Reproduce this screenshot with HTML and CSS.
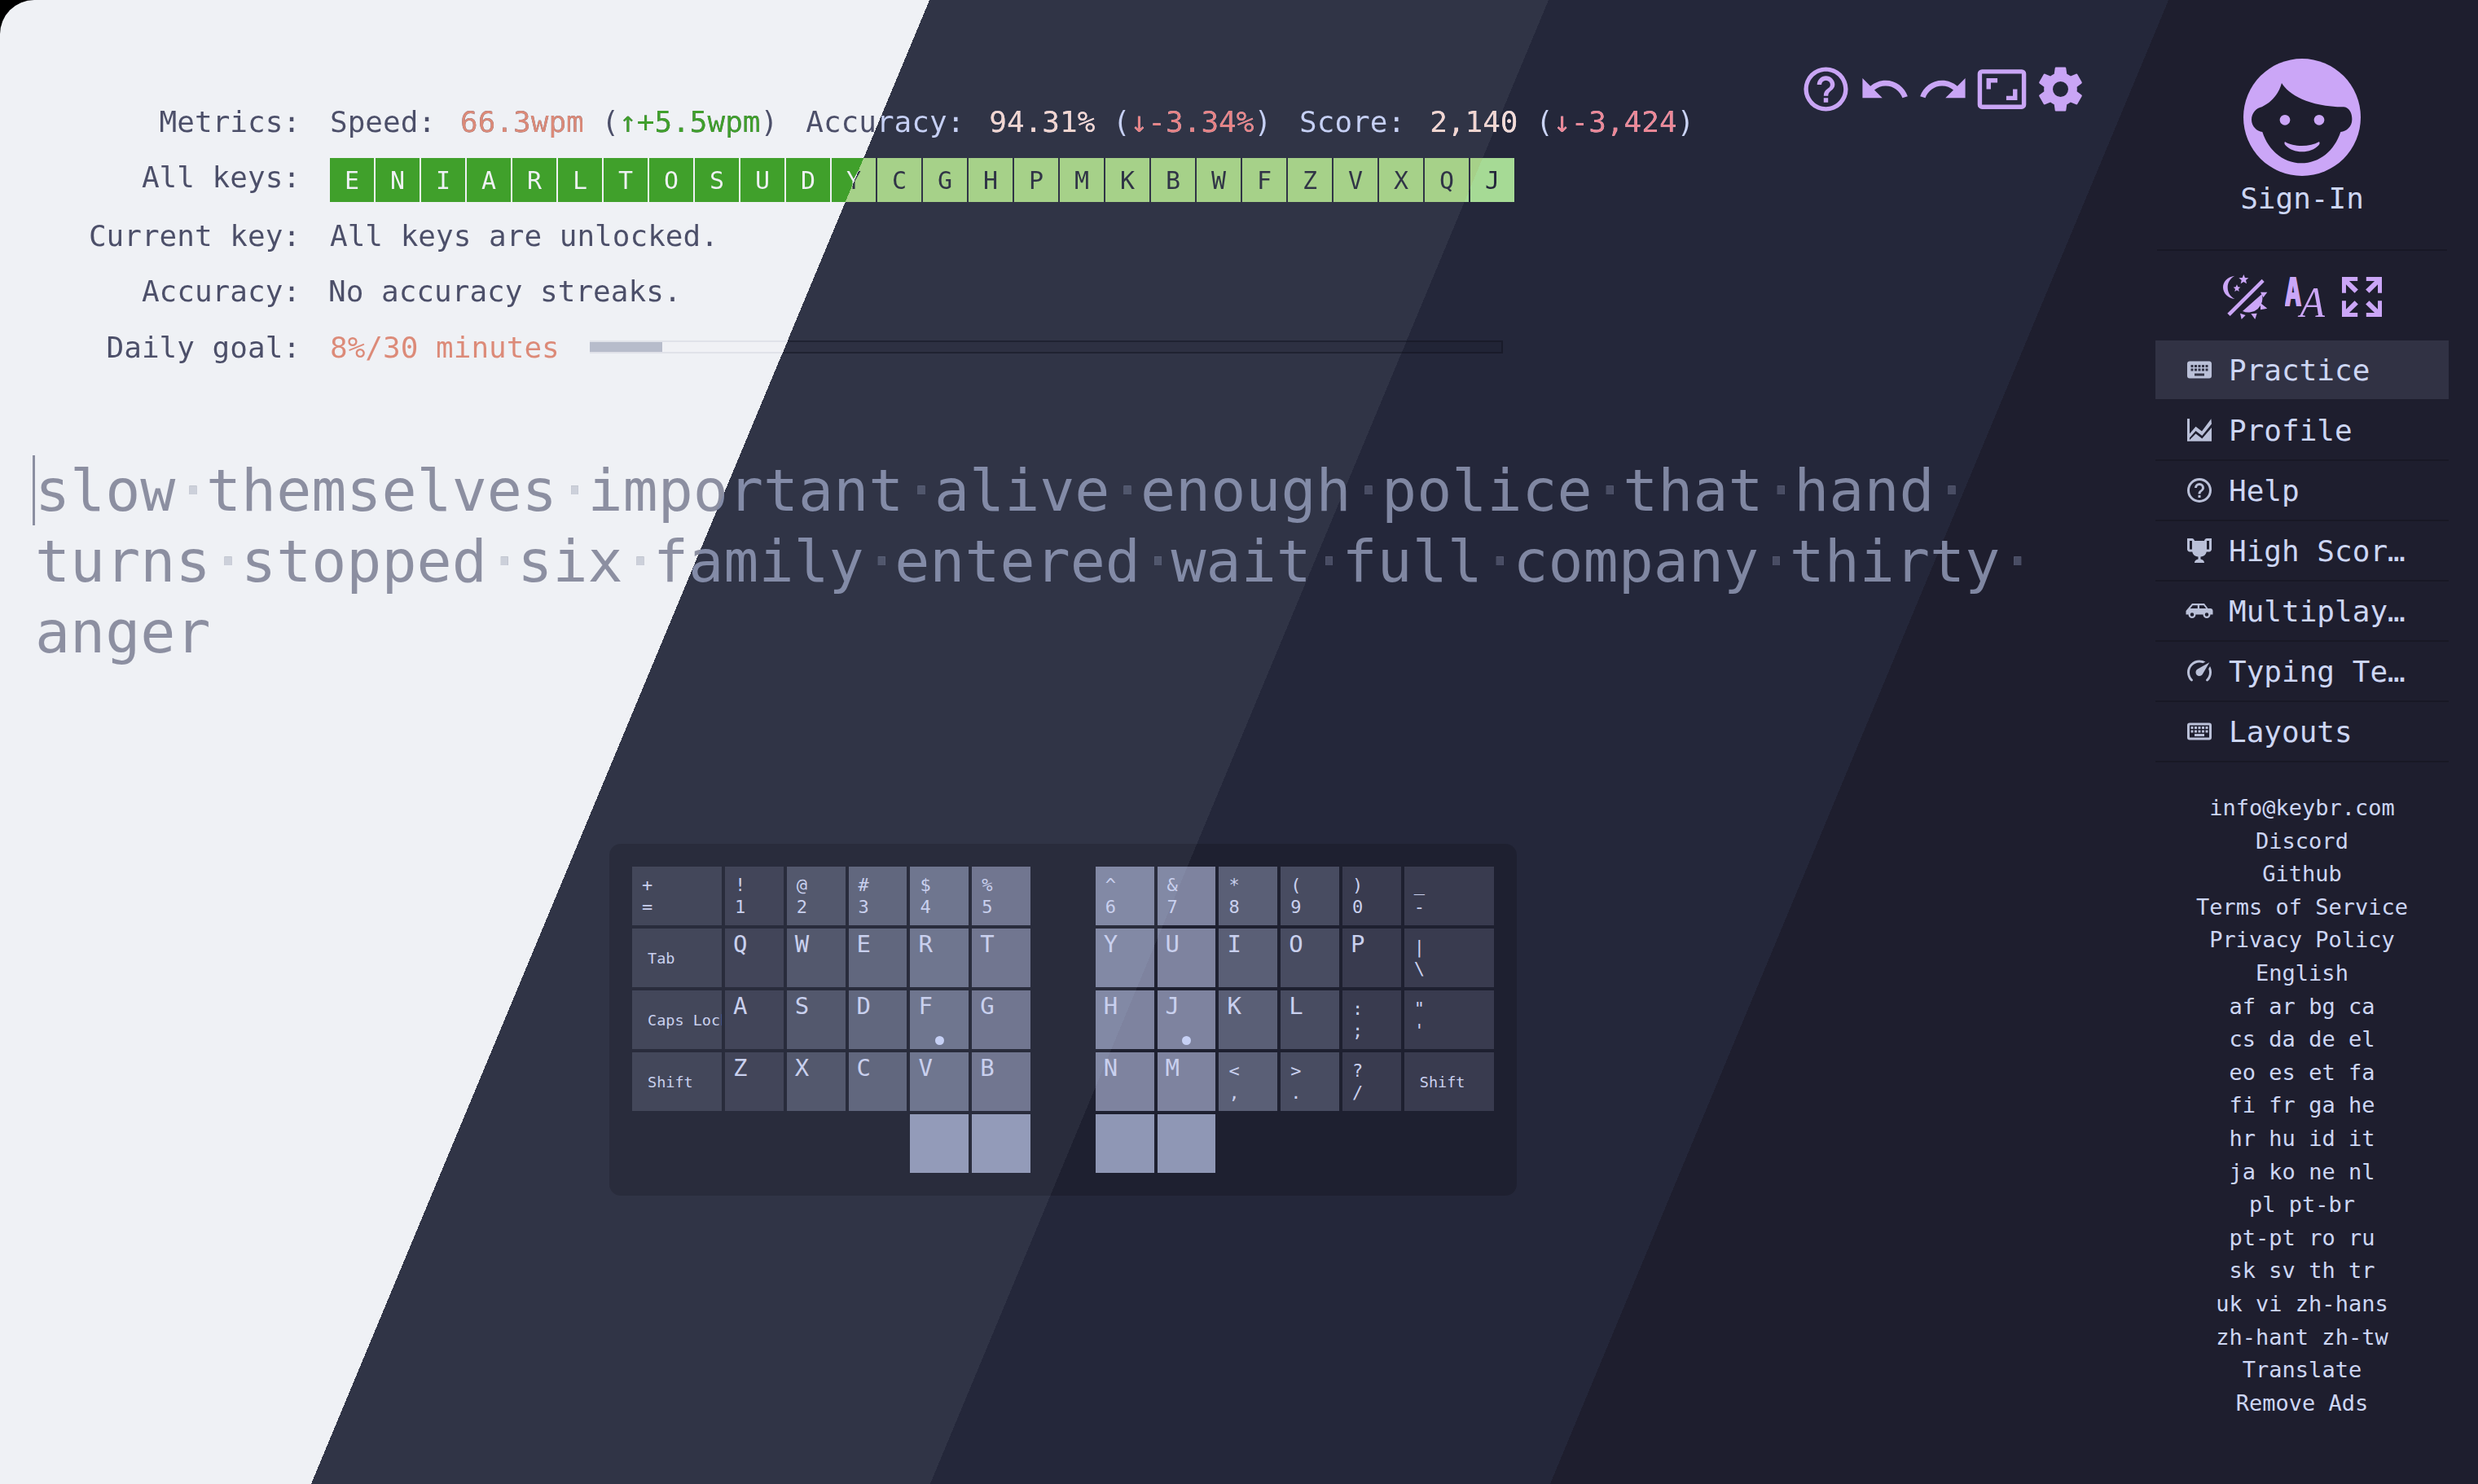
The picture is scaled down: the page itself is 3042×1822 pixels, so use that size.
FILE: index.html
```html
<!DOCTYPE html>
<html lang="en">
<head>
    <meta charset="UTF-8">
    <meta name="viewport" content="width=device-width, initial-scale=1.0">
    <title>keybr.com</title>
    <link rel="stylesheet" href="styles.css">
</head>
<body>
    <main class="main">
        <div class="top">
            <div class="stats">
                <div class="row row-metrics">
                    <div class="label">Metrics:</div>
                    <div class="metrics">
                        <div class="metric wipe c-text"><span class="metric-name">Speed:</span><span class="wipe c-rose">66.3wpm</span> (<span class="wipe c-green">↑+5.5wpm</span>)</div>
                        <div class="metric wipe c-text"><span class="metric-name">Accuracy:</span><span class="wipe c-rose">94.31%</span> (<span class="wipe c-red">↓-3.34%</span>)</div>
                        <div class="metric wipe c-text"><span class="metric-name">Score:</span><span class="wipe c-rose">2,140</span> (<span class="wipe c-red">↓-3,424</span>)</div>
                    </div>
                </div>
                <div class="row">
                    <div class="label label-keys">All keys:</div>
                    <div class="keyset">
                        <div class="unlocked"><span class="wipe c-on-key">E</span></div>
                        <div class="unlocked"><span class="wipe c-on-key">N</span></div>
                        <div class="unlocked"><span class="wipe c-on-key">I</span></div>
                        <div class="unlocked"><span class="wipe c-on-key">A</span></div>
                        <div class="unlocked"><span class="wipe c-on-key">R</span></div>
                        <div class="unlocked"><span class="wipe c-on-key">L</span></div>
                        <div class="unlocked"><span class="wipe c-on-key">T</span></div>
                        <div class="unlocked"><span class="wipe c-on-key">O</span></div>
                        <div class="unlocked"><span class="wipe c-on-key">S</span></div>
                        <div class="unlocked"><span class="wipe c-on-key">U</span></div>
                        <div class="unlocked"><span class="wipe c-on-key">D</span></div>
                        <div class="unlocked"><span class="wipe c-on-key">Y</span></div>
                        <div class="unlocked"><span class="wipe c-on-key">C</span></div>
                        <div class="unlocked"><span class="wipe c-on-key">G</span></div>
                        <div class="unlocked"><span class="wipe c-on-key">H</span></div>
                        <div class="unlocked"><span class="wipe c-on-key">P</span></div>
                        <div class="unlocked"><span class="wipe c-on-key">M</span></div>
                        <div class="unlocked"><span class="wipe c-on-key">K</span></div>
                        <div class="unlocked"><span class="wipe c-on-key">B</span></div>
                        <div class="unlocked"><span class="wipe c-on-key">W</span></div>
                        <div class="unlocked"><span class="wipe c-on-key">F</span></div>
                        <div class="unlocked"><span class="wipe c-on-key">Z</span></div>
                        <div class="unlocked"><span class="wipe c-on-key">V</span></div>
                        <div class="unlocked"><span class="wipe c-on-key">X</span></div>
                        <div class="unlocked"><span class="wipe c-on-key">Q</span></div>
                        <div class="unlocked"><span class="wipe c-on-key">J</span></div>
                    </div>
                </div>
                <div class="row">
                    <div class="label">Current key:</div>
                    <div class="value">All keys are unlocked.</div>
                </div>
                <div class="row">
                    <div class="label">Accuracy:</div>
                    <div class="value value-tight">No accuracy streaks.</div>
                </div>
                <div class="row row-goal">
                    <div class="label">Daily goal:</div>
                    <div class="goal-text">8%/30 minutes</div>
                    <div class="goal-track">
                        <div class="goal-inner"><div class="goal-fill" style="width: 8%"></div></div>
                    </div>
                </div>
            </div>

            <div class="toolbar">
                <svg class="tool" viewBox="0 0 24 24"><path d="M11,18H13V16H11V18M12,2A10,10 0 0,0 2,12A10,10 0 0,0 12,22A10,10 0 0,0 22,12A10,10 0 0,0 12,2M12,20C7.59,20 4,16.41 4,12C4,7.59 7.59,4 12,4C16.41,4 20,7.59 20,12C20,16.41 16.41,20 12,20M12,6A4,4 0 0,0 8,10H10A2,2 0 0,1 12,8A2,2 0 0,1 14,10C14,12 11,11.75 11,15H13C13,12.75 16,12.5 16,10A4,4 0 0,0 12,6Z"/></svg>
                <svg class="tool" viewBox="0 0 24 24"><path d="M12.5,8C9.85,8 7.45,9 5.6,10.6L2,7V16H11L7.38,12.38C8.77,11.22 10.54,10.5 12.5,10.5C16.04,10.5 19.05,12.81 20.1,16L22.47,15.22C21.08,11.03 17.15,8 12.5,8Z"/></svg>
                <svg class="tool" viewBox="0 0 24 24"><path d="M18.4,10.6C16.55,9 14.15,8 11.5,8C6.85,8 2.92,11.03 1.54,15.22L3.9,16C4.95,12.81 7.95,10.5 11.5,10.5C13.45,10.5 15.23,11.22 16.62,12.38L13,16H22V7L18.4,10.6Z"/></svg>
                <svg class="tool" viewBox="0 0 24 24"><path d="M19,12H17V15H14V17H19V12M7,9H10V7H5V12H7V9M21,3H3A2,2 0 0,0 1,5V19A2,2 0 0,0 3,21H21A2,2 0 0,0 23,19V5A2,2 0 0,0 21,3M21,19H3V5H21V19Z"/></svg>
                <svg class="tool" viewBox="0 0 24 24"><path d="M12,15.5A3.5,3.5 0 0,1 8.5,12A3.5,3.5 0 0,1 12,8.5A3.5,3.5 0 0,1 15.5,12A3.5,3.5 0 0,1 12,15.5M19.43,12.97C19.47,12.65 19.5,12.33 19.5,12C19.5,11.67 19.47,11.34 19.43,11L21.54,9.37C21.73,9.22 21.78,8.95 21.66,8.73L19.66,5.27C19.54,5.05 19.27,4.96 19.05,5.05L16.56,6.05C16.04,5.66 15.5,5.32 14.87,5.07L14.5,2.42C14.46,2.18 14.25,2 14,2H10C9.75,2 9.54,2.18 9.5,2.42L9.13,5.07C8.5,5.32 7.96,5.66 7.44,6.05L4.95,5.05C4.73,4.96 4.46,5.05 4.34,5.27L2.34,8.73C2.21,8.95 2.27,9.22 2.46,9.37L4.57,11C4.53,11.34 4.5,11.67 4.5,12C4.5,12.33 4.53,12.65 4.57,12.97L2.46,14.63C2.27,14.78 2.21,15.05 2.34,15.27L4.34,18.73C4.46,18.95 4.73,19.03 4.95,18.95L7.44,17.94C7.96,18.34 8.5,18.68 9.13,18.93L9.5,21.58C9.54,21.82 9.75,22 10,22H14C14.25,22 14.46,21.82 14.5,21.58L14.87,18.93C15.5,18.67 16.04,18.34 16.56,17.94L19.05,18.95C19.27,19.03 19.54,18.95 19.66,18.73L21.66,15.27C21.78,15.05 21.73,14.78 21.54,14.63L19.43,12.97Z"/></svg>
            </div>
        </div>

        <div class="practice">
            <span class="cursor"></span>
            <div class="line wipe c-word">slow<span class="wipe c-dot">·</span>themselves<span class="wipe c-dot">·</span>important<span class="wipe c-dot">·</span>alive<span class="wipe c-dot">·</span>enough<span class="wipe c-dot">·</span>police<span class="wipe c-dot">·</span>that<span class="wipe c-dot">·</span>hand<span class="wipe c-dot">·</span></div>
            <div class="line wipe c-word">turns<span class="wipe c-dot">·</span>stopped<span class="wipe c-dot">·</span>six<span class="wipe c-dot">·</span>family<span class="wipe c-dot">·</span>entered<span class="wipe c-dot">·</span>wait<span class="wipe c-dot">·</span>full<span class="wipe c-dot">·</span>company<span class="wipe c-dot">·</span>thirty<span class="wipe c-dot">·</span></div>
            <div class="line wipe c-word">anger</div>
        </div>

        <div class="keyboard">
            <div class="key wide h17">+<br>=</div>
            <div class="key sym h16">!<br>1</div>
            <div class="key sym h27">@<br>2</div>
            <div class="key sym h36">#<br>3</div>
            <div class="key sym h45">$<br>4</div>
            <div class="key sym h46">%<br>5</div>
            <div class="spacer"></div>
            <div class="key sym h58">^<br>6</div>
            <div class="key sym h58">&amp;<br>7</div>
            <div class="key sym h36">*<br>8</div>
            <div class="key sym h25">(<br>9</div>
            <div class="key sym h16">)<br>0</div>
            <div class="key wide h16">_<br>-</div>

            <div class="key named h17">Tab</div>
            <div class="key h16">Q</div>
            <div class="key h27">W</div>
            <div class="key h36">E</div>
            <div class="key h45">R</div>
            <div class="key h46">T</div>
            <div class="spacer"></div>
            <div class="key h58">Y</div>
            <div class="key h58">U</div>
            <div class="key h36">I</div>
            <div class="key h25">O</div>
            <div class="key h16">P</div>
            <div class="key wide h16">|<br>\</div>

            <div class="key named h17">Caps Lock</div>
            <div class="key h16">A</div>
            <div class="key h27">S</div>
            <div class="key h36">D</div>
            <div class="key h45 bump">F</div>
            <div class="key h46">G</div>
            <div class="spacer"></div>
            <div class="key h58">H</div>
            <div class="key h58 bump">J</div>
            <div class="key h36">K</div>
            <div class="key h25">L</div>
            <div class="key sym h16">:<br>;</div>
            <div class="key wide h16">"<br>'</div>

            <div class="key named h17">Shift</div>
            <div class="key h16">Z</div>
            <div class="key h27">X</div>
            <div class="key h36">C</div>
            <div class="key h45">V</div>
            <div class="key h46">B</div>
            <div class="spacer"></div>
            <div class="key h58">N</div>
            <div class="key h58">M</div>
            <div class="key sym h36">&lt;<br>,</div>
            <div class="key sym h25">&gt;<br>.</div>
            <div class="key sym h16">?<br>/</div>
            <div class="key named h16">Shift</div>

            <div class="key h68 thumb-left"></div>
            <div class="key h68"></div>
            <div class="key h68 thumb-right"></div>
            <div class="key h68"></div>
        </div>
    </main>

    <aside class="sidebar">
        <div class="account">
            <svg class="avatar" viewBox="0 0 432 432">
                <circle cx="216" cy="216" r="216" class="mauve"/>
                <path class="face" d="M141 90C165 130 240 178 370 178C392 180 401 205 400 225C400 250 380 268 358 270C335 340 280 385 213 385C150 385 92 340 70 270C50 268 30 250 30 225C30 200 48 182 68 178C105 160 130 130 141 90Z"/>
                <circle cx="153" cy="226" r="19" class="mauve"/>
                <circle cx="279" cy="226" r="19" class="mauve"/>
                <path class="mauve" d="M153 306C185 326 245 326 279 306C282 310 281 314 278 318C262 335 240 343 216 343C192 343 170 335 154 318C151 314 150 310 153 306Z"/>
            </svg>
            <div class="sign-in">Sign-In</div>
        </div>

        <div class="prefs">
            <svg class="pref-theme" viewBox="0 0 165 165">
                <path d="M43 5C15 8 0 28 0 47C0 68 18 88 43 90C25 80 17 65 17 47C17 30 25 15 43 5Z"/>
                <polygon points="76,0 81,12 94,13 84,21 87,34 76,27 65,34 68,21 58,13 71,12"/>
                <polygon points="51,37 55,46 64,47 57,53 59,63 51,58 43,63 45,53 38,47 47,46"/>
                <polygon points="143,17 152,27 26,153 16,143"/>
                <path d="M143 72A52 52 0 0 1 72 135Z"/>
                <polygon points="138,65 163,65 148,85"/>
                <polygon points="138,105 163,125 138,130"/>
                <polygon points="103,145 125,143 118,165"/>
                <polygon points="63,143 83,150 68,165"/>
            </svg>
            <svg class="pref" viewBox="0 0 148 148">
                <text class="aa-bold" x="0" y="105" textLength="60" lengthAdjust="spacingAndGlyphs">A</text>
                <text class="aa-serif" x="56" y="147" textLength="92" lengthAdjust="spacingAndGlyphs">A</text>
            </svg>
            <svg class="pref" viewBox="0 0 148 148">
                <path d="M0 0H58V15H27L60 47L47 60L15 28V60H0Z"/>
                <path d="M148 0H90V15H121L88 47L101 60L133 28V60H148Z"/>
                <path d="M0 148H58V133H27L60 101L47 88L15 120V88H0Z"/>
                <path d="M148 148H90V133H121L88 101L101 88L133 120V88H148Z"/>
            </svg>
        </div>

        <nav class="menu">
            <a class="menu-item active">
                <svg viewBox="0 0 24 24"><path d="M19,10H17V8H19M19,13H17V11H19M16,10H14V8H16M16,13H14V11H16M16,17H8V15H16M7,10H5V8H7M7,13H5V11H7M8,11H10V13H8M8,8H10V10H8M11,11H13V13H11M11,8H13V10H11M20,5H4C2.89,5 2,5.89 2,7V17A2,2 0 0,0 4,19H20A2,2 0 0,0 22,17V7C22,5.89 21.1,5 20,5Z"/></svg>
                <span class="menu-text">Practice</span>
            </a>
            <a class="menu-item">
                <svg viewBox="0 0 24 24"><path d="M2 2.7H4V21.2H2Z"/><path d="M4 15L9 9.2L14 13L21.6 2.8L22 7L14.2 16.6L9 12.6L4 18.4Z"/><path d="M4 21.2V20L9 15L14.2 19L22 10V21.2Z"/></svg>
                <span class="menu-text">Profile</span>
            </a>
            <a class="menu-item">
                <svg viewBox="0 0 24 24"><path d="M11,18H13V16H11V18M12,2A10,10 0 0,0 2,12A10,10 0 0,0 12,22A10,10 0 0,0 22,12A10,10 0 0,0 12,2M12,20C7.59,20 4,16.41 4,12C4,7.59 7.59,4 12,4C16.41,4 20,7.59 20,12C20,16.41 16.41,20 12,20M12,6A4,4 0 0,0 8,10H10A2,2 0 0,1 12,8A2,2 0 0,1 14,10C14,12 11,11.75 11,15H13C13,12.75 16,12.5 16,10A4,4 0 0,0 12,6Z"/></svg>
                <span class="menu-text">Help</span>
            </a>
            <a class="menu-item">
                <svg viewBox="0 0 24 24"><path d="M20.2,2H19.5H18C17.1,2 16,3 16,4H8C8,3 6.9,2 6,2H4.5H3.8H2V11C2,12 3,13 4,13H6.2C6.6,15 7.9,16.7 11,17V19.08C8,19.54 8,22 8,22H16C16,22 16,19.54 13,19.08V17C16.1,16.7 17.4,15 17.8,13H20C21,13 22,12 22,11V2H20.2M4,11V4H6V6V11C5.1,11 4.3,11 4,11M20,11C19.7,11 18.9,11 18,11V6V4H20V11Z"/></svg>
                <span class="menu-text">High Scores</span>
            </a>
            <a class="menu-item">
                <svg viewBox="0 0 24 24"><path d="M16,6H6L1,12V15H3A3,3 0 0,0 6,18A3,3 0 0,0 9,15H15A3,3 0 0,0 18,18A3,3 0 0,0 21,15H23V12C23,10.89 22.1,10 21,10H19L16,6M6.5,7.5H10.5V10H4.5L6.5,7.5M12,7.5H15.5L17.46,10H12V7.5M6,13.5A1.5,1.5 0 0,1 7.5,15A1.5,1.5 0 0,1 6,16.5A1.5,1.5 0 0,1 4.5,15A1.5,1.5 0 0,1 6,13.5M18,13.5A1.5,1.5 0 0,1 19.5,15A1.5,1.5 0 0,1 18,16.5A1.5,1.5 0 0,1 16.5,15A1.5,1.5 0 0,1 18,13.5Z"/></svg>
                <span class="menu-text">Multiplayer</span>
            </a>
            <a class="menu-item">
                <svg viewBox="0 0 24 24"><path d="M12,16A3,3 0 0,1 9,13C9,11.88 9.61,10.9 10.5,10.39L20.21,4.77L14.68,14.35C14.18,15.33 13.17,16 12,16M12,3C13.81,3 15.5,3.5 16.97,4.32L14.87,5.53C14,5.19 13,5 12,5A8,8 0 0,0 4,13C4,15.21 4.89,17.21 6.34,18.65H6.35C6.74,19.04 6.74,19.67 6.35,20.06C5.96,20.45 5.32,20.45 4.93,20.07V20.07C3.12,18.26 2,15.76 2,13A10,10 0 0,1 12,3M22,13C22,15.76 20.88,18.26 19.07,20.07V20.07C18.68,20.45 18.05,20.45 17.66,20.06C17.27,19.67 17.27,19.04 17.66,18.65V18.65C19.11,17.2 20,15.21 20,13C20,12 19.81,11 19.46,10.1L20.67,8C21.5,9.5 22,11.18 22,13Z"/></svg>
                <span class="menu-text">Typing Test</span>
            </a>
            <a class="menu-item">
                <svg viewBox="0 0 24 24"><path d="M4,5A2,2 0 0,0 2,7V17A2,2 0 0,0 4,19H20A2,2 0 0,0 22,17V7A2,2 0 0,0 20,5H4M4,7H20V17H4V7M5,8V10H7V8H5M8,8V10H10V8H8M11,8V10H13V8H11M14,8V10H16V8H14M17,8V10H19V8H17M5,11V13H7V11H5M8,11V13H10V11H8M11,11V13H13V11H11M14,11V13H16V11H14M17,11V13H19V11H17M8,14V16H16V14H8Z"/></svg>
                <span class="menu-text">Layouts</span>
            </a>
        </nav>

        <div class="links">
            <div>info@keybr.com</div>
            <div>Discord</div>
            <div>Github</div>
            <div>Terms of Service</div>
            <div>Privacy Policy</div>
            <div>English</div>
            <div>af ar bg ca</div>
            <div>cs da de el</div>
            <div>eo es et fa</div>
            <div>fi fr ga he</div>
            <div>hr hu id it</div>
            <div>ja ko ne nl</div>
            <div>pl pt-br</div>
            <div>pt-pt ro ru</div>
            <div>sk sv th tr</div>
            <div>uk vi zh-hans</div>
            <div>zh-hant zh-tw</div>
            <div>Translate</div>
            <div>Remove Ads</div>
        </div>
    </aside>
</body>
</html>
```
FILE: styles.css
```css
/* the page is cut in four theme flavours along the same diagonal */
:root {
    --angle: 112.62deg;
    --a: 1053.3px;
    --b: 1754.8px;
    --c: 2457.3px;
}

html {
    background-color: #000;
}

body {
    display: flex;
    height: 100vh;
    margin: 0;
    overflow: hidden;
    border-top-left-radius: 42px;
    font-family: "DejaVu Sans Mono", monospace;
    font-size: 36px;
    color: #cdd6f4;
    background-image: linear-gradient(var(--angle), #eff1f5 var(--a), #303446 var(--a) var(--b), #24273a var(--b) var(--c), #1e1e2e var(--c));
}

/* text painted through a viewport sized gradient, so it changes colour at the diagonals */
.wipe,
.label,
.value,
.goal-text {
    background-attachment: fixed;
    -webkit-background-clip: text;
    background-clip: text;
    color: transparent;
}

.c-text,
.label,
.value {
    background-image: linear-gradient(var(--angle), #4c4f69 var(--a), #c6d0f5 var(--a) var(--b), #cad3f5 var(--b) var(--c), #cdd6f4 var(--c));
}

.c-rose,
.goal-text {
    background-image: linear-gradient(var(--angle), #dc8a78 var(--a), #f2d5cf var(--a) var(--b), #f4dbd6 var(--b) var(--c), #f5e0dc var(--c));
}

.c-green {
    background-image: linear-gradient(var(--angle), #40a02b var(--a), #a6d189 var(--a) var(--b), #a6da95 var(--b));
}

.c-red {
    background-image: linear-gradient(var(--angle), #d20f39 var(--a), #e78284 var(--a) var(--b), #ed8796 var(--b));
}

.c-on-key {
    background-image: linear-gradient(var(--angle), #eff1f5 var(--a), #303446 var(--a) var(--b), #24273a var(--b));
}

.c-word {
    background-image: linear-gradient(var(--angle), #8c8fa1 var(--a), #838ba7 var(--a) var(--b), #8087a2 var(--b));
}

.c-dot {
    letter-spacing: -5.6px;
    background-image: linear-gradient(var(--angle), #ccd0da var(--a), #51576d var(--a) var(--b), #494d64 var(--b));
}

.main {
    flex: 1;
    min-width: 0;
}

.top {
    display: flex;
    justify-content: space-between;
    align-items: flex-start;
}

.stats {
    padding-top: 122px;
}

.row {
    display: flex;
    align-items: center;
    height: 54px;
    margin-bottom: 14px;
}

.row-metrics {
    margin-bottom: 18px;
}

.row-goal {
    margin-top: 15px;
    margin-bottom: 0;
}

.label {
    width: 369px;
    margin-right: 36px;
    text-align: right;
}

.label-keys {
    margin-bottom: 8px;
}

.value-tight {
    margin-left: -2px;
}

.metrics {
    display: flex;
    gap: 34px;
}

.metric {
    white-space: pre;
}

.metric-name {
    margin-right: 30px;
}

.keyset {
    display: flex;
}

.unlocked {
    display: flex;
    justify-content: center;
    align-items: center;
    width: 54px;
    height: 54px;
    margin-right: 2px;
    font-size: 30px;
    background-attachment: fixed;
    background-image: linear-gradient(var(--angle), #40a02b var(--a), #a6d189 var(--a) var(--b), #a6da95 var(--b));
}

.goal-track {
    width: 1121px;
    height: 16px;
    margin-left: 37px;
    padding: 2px;
    box-sizing: border-box;
    background-attachment: fixed;
    background-image: linear-gradient(var(--angle), #e0e2e9 var(--a), #1f2231 var(--a) var(--b), #191b2a var(--b));
}

.goal-inner {
    height: 100%;
    background-attachment: fixed;
    background-image: linear-gradient(var(--angle), #f0f1f5 var(--a), #2d3042 var(--a) var(--b), #212436 var(--b));
}

.goal-fill {
    height: 100%;
    margin-left: -2px;
    background-color: #b7bccb;
}

.toolbar {
    display: flex;
    gap: 7px;
    margin-top: 77px;
    margin-right: 84px;
}

.tool {
    width: 65px;
    height: 65px;
    fill: #c9a5f5;
}

.practice {
    position: relative;
    margin-top: 106px;
    padding-left: 43px;
    font-size: 71.6px;
    line-height: 87px;
}

.line {
    white-space: nowrap;
}

.cursor {
    position: absolute;
    left: 40px;
    top: 0;
    width: 3px;
    height: 86px;
    background-color: #8c8fa1;
}

.keyboard {
    display: grid;
    grid-template-columns: 110px repeat(5, 71.8px) 71.8px repeat(5, 71.8px) 110px;
    grid-auto-rows: 72px;
    gap: 4px;
    width: 1058px;
    margin-top: 216px;
    margin-left: 748px;
    padding: 28px 28px 28px 28px;
    border-radius: 14px;
    background-attachment: fixed;
    background-image: linear-gradient(var(--angle), #292c3c var(--b), #1e2030 var(--b));
}

.key {
    position: relative;
    overflow: hidden;
    padding: 3px 0 0 10px;
    box-sizing: border-box;
    font-size: 29px;
    line-height: 33px;
    color: #c9d0ee;
}

.sym,
.wide {
    padding: 9px 0 0 12px;
    font-size: 22px;
    line-height: 27px;
}

.named {
    display: flex;
    align-items: center;
    padding: 0 0 0 19px;
    font-size: 18.5px;
    white-space: nowrap;
}

.bump::after {
    content: "";
    position: absolute;
    left: 50%;
    bottom: 5px;
    width: 11px;
    height: 11px;
    margin-left: -5.5px;
    border-radius: 50%;
    background-color: #c6d0f5;
}

.thumb-left {
    grid-column-start: 5;
}

.thumb-right {
    grid-column-start: 8;
}

.h16 { background-color: rgba(198, 208, 245, 0.16); }
.h17 { background-color: rgba(198, 208, 245, 0.17); }
.h25 { background-color: rgba(198, 208, 245, 0.25); }
.h27 { background-color: rgba(198, 208, 245, 0.27); }
.h36 { background-color: rgba(198, 208, 245, 0.36); }
.h45 { background-color: rgba(198, 208, 245, 0.45); }
.h46 { background-color: rgba(198, 208, 245, 0.46); }
.h58 { background-color: rgba(198, 208, 245, 0.57); }
.h68 { background-color: rgba(198, 208, 245, 0.68); }

.sidebar {
    flex: none;
    width: 360px;
    margin-right: 36px;
    padding-top: 72px;
}

.account {
    display: flex;
    flex-direction: column;
    align-items: center;
    margin: 0 2px;
    padding-bottom: 41px;
    border-bottom: 2px solid #181825;
}

.avatar {
    width: 144px;
    height: 144px;
}

.mauve {
    fill: #cba6f7;
}

.face {
    fill: #1e1e2e;
}

.sign-in {
    margin-top: 7px;
    line-height: 42px;
}

.prefs {
    display: flex;
    justify-content: center;
    align-items: center;
    gap: 21px;
    margin-top: 29px;
    margin-bottom: 26px;
    fill: #cba6f7;
}

.pref-theme {
    width: 55px;
    height: 55px;
}

.pref {
    width: 49px;
    height: 49px;
}

.aa-bold {
    font-family: "DejaVu Sans Mono", monospace;
    font-size: 144px;
    font-weight: bold;
    stroke: #cba6f7;
    stroke-width: 6px;
}

.aa-serif {
    font-family: "Liberation Serif", serif;
    font-size: 162px;
    font-style: italic;
}

.menu-item {
    display: flex;
    align-items: center;
    gap: 18px;
    height: 72px;
    padding-left: 36px;
    border-bottom: 2px solid #181825;
    background-clip: padding-box;
}

.menu-item svg {
    flex: none;
    width: 36px;
    height: 36px;
    fill: #bac0d8;
    fill-rule: evenodd;
}

.menu-item.active {
    background-color: #313244;
    border-bottom-color: transparent;
}

.menu-text {
    width: 217px;
    overflow: hidden;
    white-space: nowrap;
    text-overflow: ellipsis;
}

.links {
    margin-top: 36px;
    font-size: 27px;
    line-height: 40.6px;
    text-align: center;
}
```
